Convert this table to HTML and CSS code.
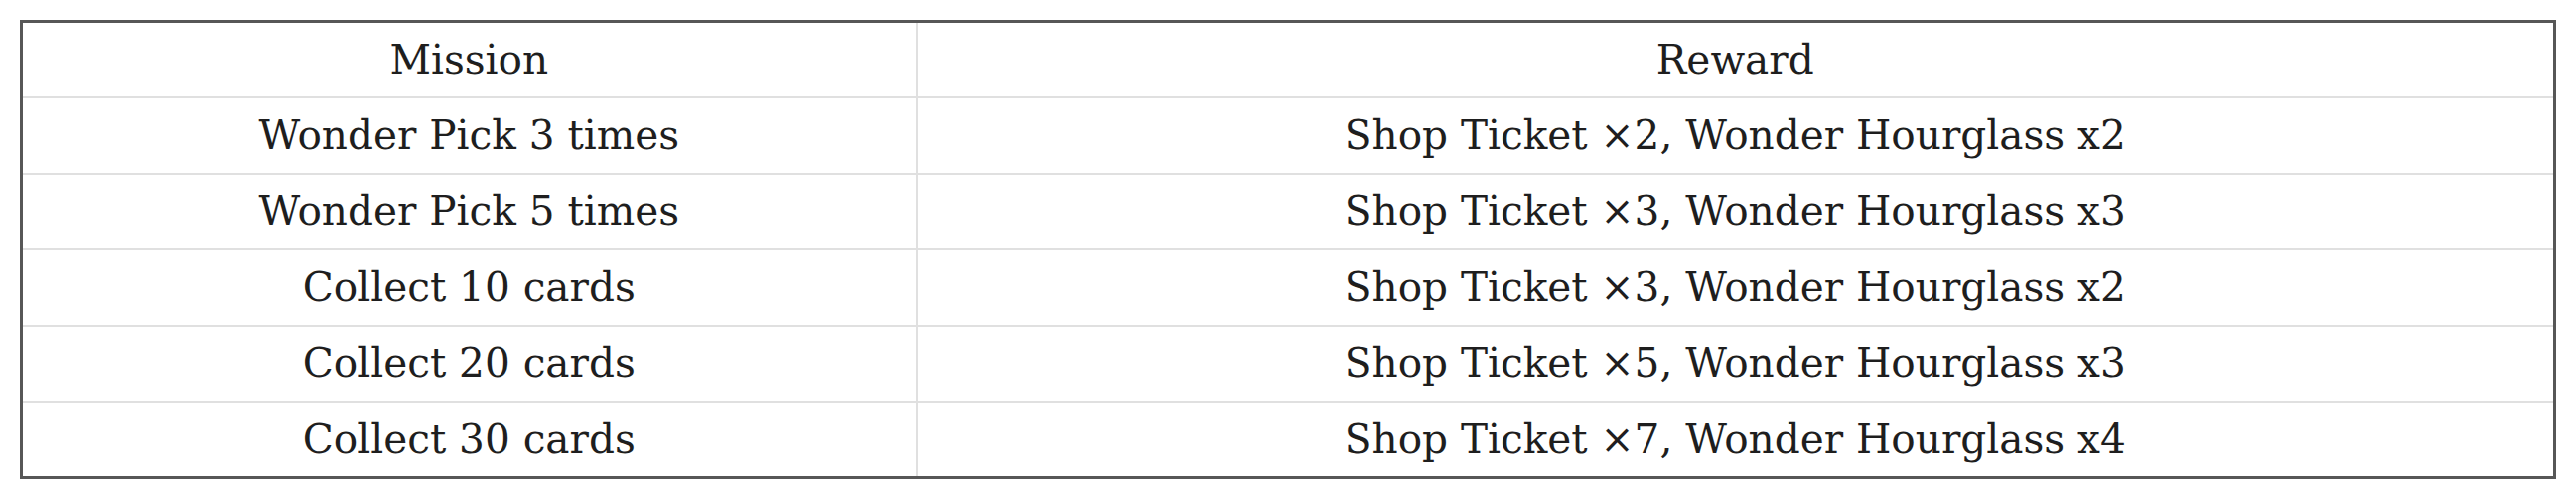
FILE: index.html
```html
<!DOCTYPE html>
<html>
<head>
<meta charset="utf-8">
<link rel="stylesheet" href="styles.css">
</head>
<body>
<table class="missions">
  <colgroup><col class="col-mission"><col class="col-reward"></colgroup>
  <thead>
    <tr><th>Mission</th><th>Reward</th></tr>
  </thead>
  <tbody>
    <tr><td>Wonder Pick 3 times</td><td>Shop Ticket ×2, Wonder Hourglass x2</td></tr>
    <tr><td>Wonder Pick 5 times</td><td>Shop Ticket ×3, Wonder Hourglass x3</td></tr>
    <tr><td>Collect 10 cards</td><td>Shop Ticket ×3, Wonder Hourglass x2</td></tr>
    <tr><td>Collect 20 cards</td><td>Shop Ticket ×5, Wonder Hourglass x3</td></tr>
    <tr><td>Collect 30 cards</td><td>Shop Ticket ×7, Wonder Hourglass x4</td></tr>
  </tbody>
</table>
</body>
</html>
```
FILE: styles.css
```css
html, body {
  margin: 0;
  padding: 0;
  background: #ffffff;
}
body {
  padding: 20px 0 0 20px;
  font-family: "DejaVu Serif", serif;
  color: #1e1e1e;
}
.missions {
  border-collapse: collapse;
  width: 2554px;
  border: 3px solid #575757;
  table-layout: fixed;
}
.col-mission { width: 901px; }
.missions th,
.missions td {
  height: 76.5px;
  padding: 0;
  box-sizing: border-box;
  border: 2px solid #e0e0e0;
  text-align: center;
  vertical-align: middle;
  font-size: 40.6px;
  font-weight: normal;
  line-height: 1;
}
```
